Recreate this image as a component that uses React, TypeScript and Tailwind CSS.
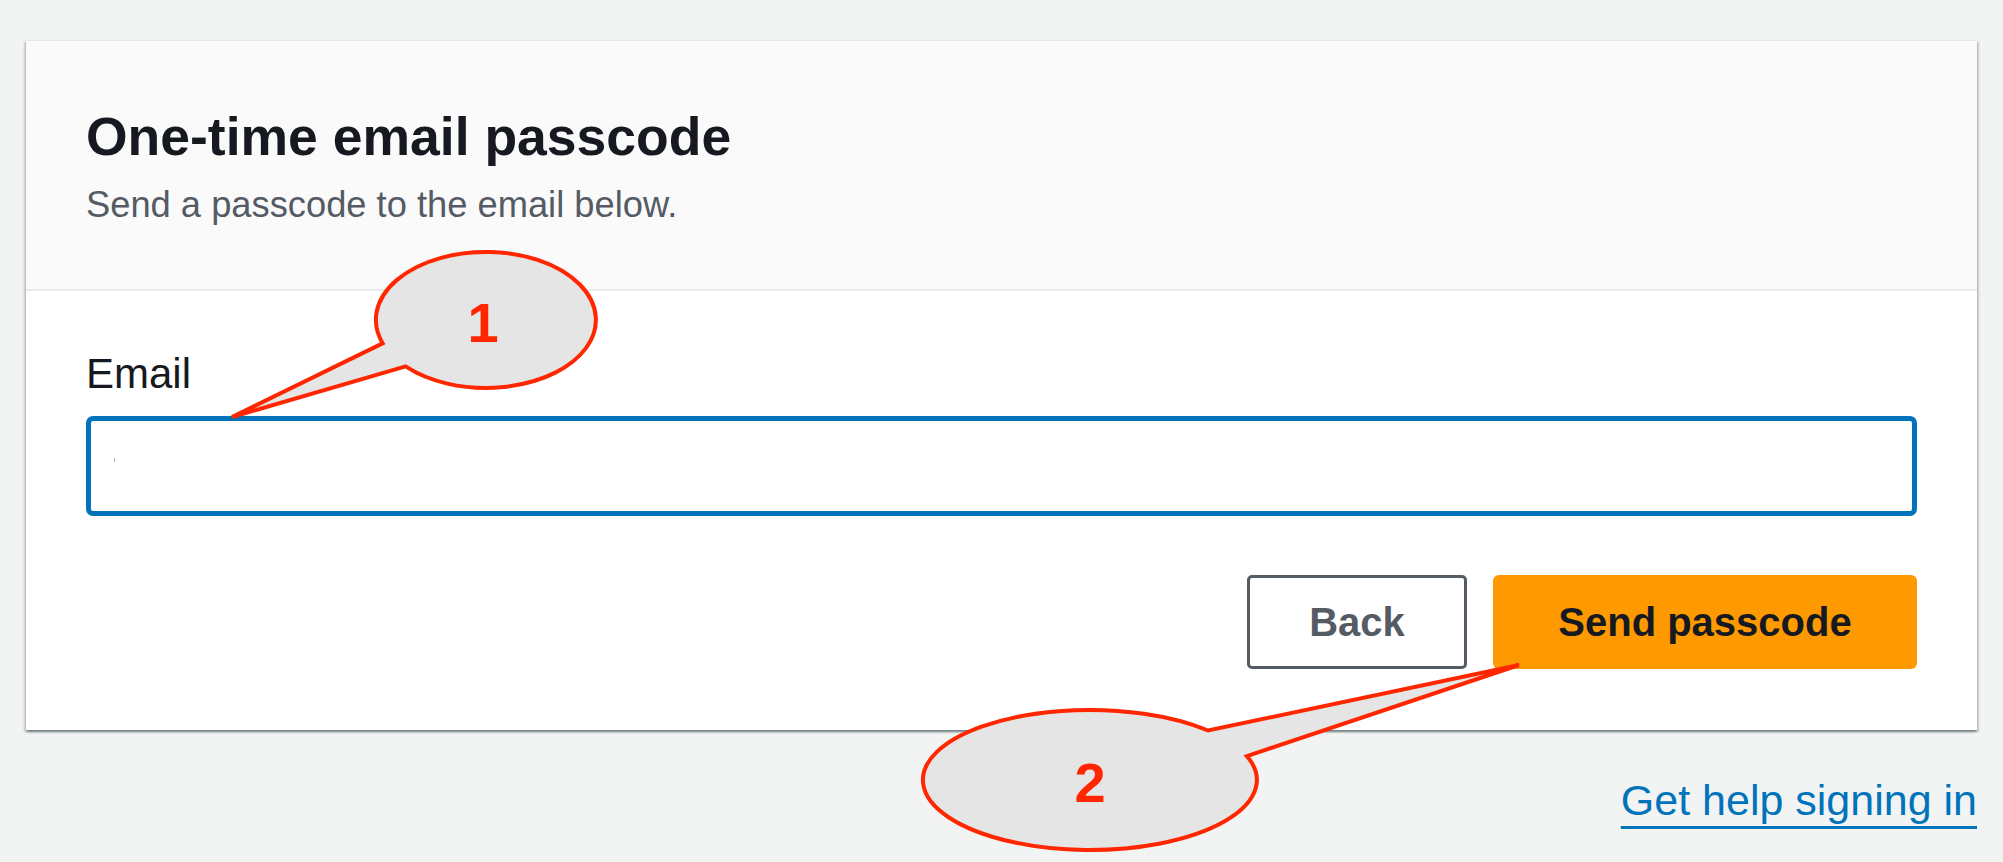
import React from "react";

// 説明用の吹き出し（赤い枠の楕円＋しっぽ）
const Callouts = () => (
  <svg
    className="pointer-events-none absolute left-0 top-0"
    width={2003}
    height={862}
    viewBox="0 0 2003 862"
  >
    <path
      d="M 382.6 343.3 A 110 68 0 1 1 405.6 366.4 L 232 417 Z"
      fill="#e5e5e5"
      stroke="#ff2600"
      strokeWidth={4}
      strokeLinejoin="miter"
    />
    <text
      x={483}
      y={342}
      textAnchor="middle"
      fontFamily="'Liberation Sans', Arial, sans-serif"
      fontWeight={700}
      fontSize={56}
      fill="#ff2600"
    >
      1
    </text>
    <path
      d="M 1246.9 756.1 A 167 70 0 1 1 1208.1 730.5 L 1519 665 Z"
      fill="#e5e5e5"
      stroke="#ff2600"
      strokeWidth={4}
      strokeLinejoin="miter"
    />
    <text
      x={1090}
      y={802}
      textAnchor="middle"
      fontFamily="'Liberation Sans', Arial, sans-serif"
      fontWeight={700}
      fontSize={56}
      fill="#ff2600"
    >
      2
    </text>
  </svg>
);

export default function App() {
  return (
    <div className="relative h-[862px] overflow-hidden bg-[#f2f3f3] px-[26px] pt-[40px] font-['Liberation_Sans',Arial,sans-serif]">
      {/* カード */}
      <div className="border-t border-[#e3e7e8] bg-white shadow-[0_2px_2px_0_rgba(0,28,36,0.35),2px_2px_2px_0_rgba(0,28,36,0.15),-2px_2px_2px_0_rgba(0,28,36,0.15)]">
        <div className="border-b-2 border-[#e9ebed] bg-[#fafafa] px-[60px] pb-[62px] pt-[64px]">
          <h1 className="text-[53.5px] font-bold leading-[64px] text-[#16191f]">
            One-time email passcode
          </h1>
          <p className="mt-[14px] text-[36.3px] leading-[44px] text-[#545b64]">
            Send a passcode to the email below.
          </p>
        </div>

        <div className="px-[60px] pb-[61px] pt-[59px]">
          <label className="block text-[42px] leading-[48px] text-[#16191f]">
            Email
          </label>
          <div className="mt-[18px] flex h-[100px] items-center rounded-[7px] border-[5px] border-[#0073bb] bg-white pl-[23px]">
            <span className="-mt-[12px] h-[4px] w-px bg-[#b8b8b8]" />
          </div>

          <div className="mt-[59px] flex justify-end gap-[26px]">
            <button className="h-[94px] w-[220px] rounded-[5px] border-[3px] border-[#545b64] bg-white text-[40px] font-bold text-[#545b64]">
              Back
            </button>
            <button className="h-[94px] w-[424px] rounded-[6px] bg-[#ff9900] text-[40px] font-bold text-[#16191f]">
              Send passcode
            </button>
          </div>
        </div>
      </div>

      <div className="mt-[45px] flex justify-end">
        <a className="text-[43px] leading-[50px] text-[#0073bb] underline decoration-[3px] underline-offset-[11px]">
          Get help signing in
        </a>
      </div>

      <Callouts />
    </div>
  );
}
